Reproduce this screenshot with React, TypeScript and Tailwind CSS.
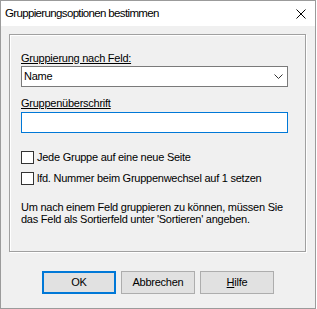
import React from "react";

const font = { fontFamily: '"Liberation Sans", Arial, sans-serif' };

function Checkbox({ label }: { label: React.ReactNode }) {
  return (
    <label className="flex h-[13px] items-center">
      <span className="h-[13px] w-[13px] shrink-0 border border-[#333333] bg-white" />
      <span className="ml-[3px] leading-[13px]">{label}</span>
    </label>
  );
}

function Button({ children, primary }: { children: React.ReactNode; primary?: boolean }) {
  return (
    <button
      className={
        primary
          ? "h-[23px] w-[74px] border-2 border-[#0078d7] bg-[#e1e1e1] text-[11px] tracking-[-0.25px] text-black"
          : "h-[23px] w-[74px] border border-[#adadad] bg-[#e1e1e1] text-[11px] tracking-[-0.25px] text-black"
      }
    >
      {children}
    </button>
  );
}

export default function App() {
  return (
    <div
      className="flex h-[309px] w-[316px] flex-col border border-[#9b9b9b] bg-[#f0f0f0] text-[11px] tracking-[-0.25px] text-black"
      style={font}
    >
      <div className="flex h-[25px] shrink-0 items-center justify-between bg-white pl-[4px] pr-[9px]">
        <span className="text-[11.5px] tracking-[-0.65px]">Gruppierungsoptionen bestimmen</span>
        <svg width="10" height="10" viewBox="0 0 10 10" className="mt-[1px]">
          <path d="M0.5 0.5 L9.5 9.5 M9.5 0.5 L0.5 9.5" stroke="#000" strokeWidth="1" fill="none" />
        </svg>
      </div>

      <div className="ml-[8px] mt-[8px] flex h-[218px] w-[297px] flex-col border border-[#a0a0a0] pl-[11px] shadow-[inset_1px_1px_0_#ffffff,1px_1px_0_#ffffff]">
        <div className="mt-[17px] leading-[13px] underline">Gruppierung nach Feld:</div>
        <div className="mt-[1px] flex h-[21px] w-[267px] items-center justify-between border border-[#7a7a7a] bg-white pl-[2px] pr-[4px]">
          <span>Name</span>
          <svg width="9" height="5" viewBox="0 0 9 5">
            <path d="M0.5 0.5 L4.5 4.5 L8.5 0.5" stroke="#333" strokeWidth="1" fill="none" />
          </svg>
        </div>

        <div className="mt-[10px] leading-[13px] underline">Gruppenüberschrift</div>
        <div className="mt-[2px] h-[21px] w-[267px] border border-[#0078d7] bg-white" />

        <div className="mt-[18px]">
          <Checkbox label="Jede Gruppe auf eine neue Seite" />
        </div>
        <div className="mt-[8px]">
          <Checkbox label="lfd. Nummer beim Gruppenwechsel auf 1 setzen" />
        </div>

        <p className="mt-[16px] leading-[12px]">
          Um nach einem Feld gruppieren zu können, müssen Sie
          <br />
          das Feld als Sortierfeld unter 'Sortieren' angeben.
        </p>
      </div>

      <div className="ml-[41px] mt-[19px] flex gap-[5px]">
        <Button primary>OK</Button>
        <Button>Abbrechen</Button>
        <Button>
          <span className="underline">H</span>ilfe
        </Button>
      </div>
    </div>
  );
}
